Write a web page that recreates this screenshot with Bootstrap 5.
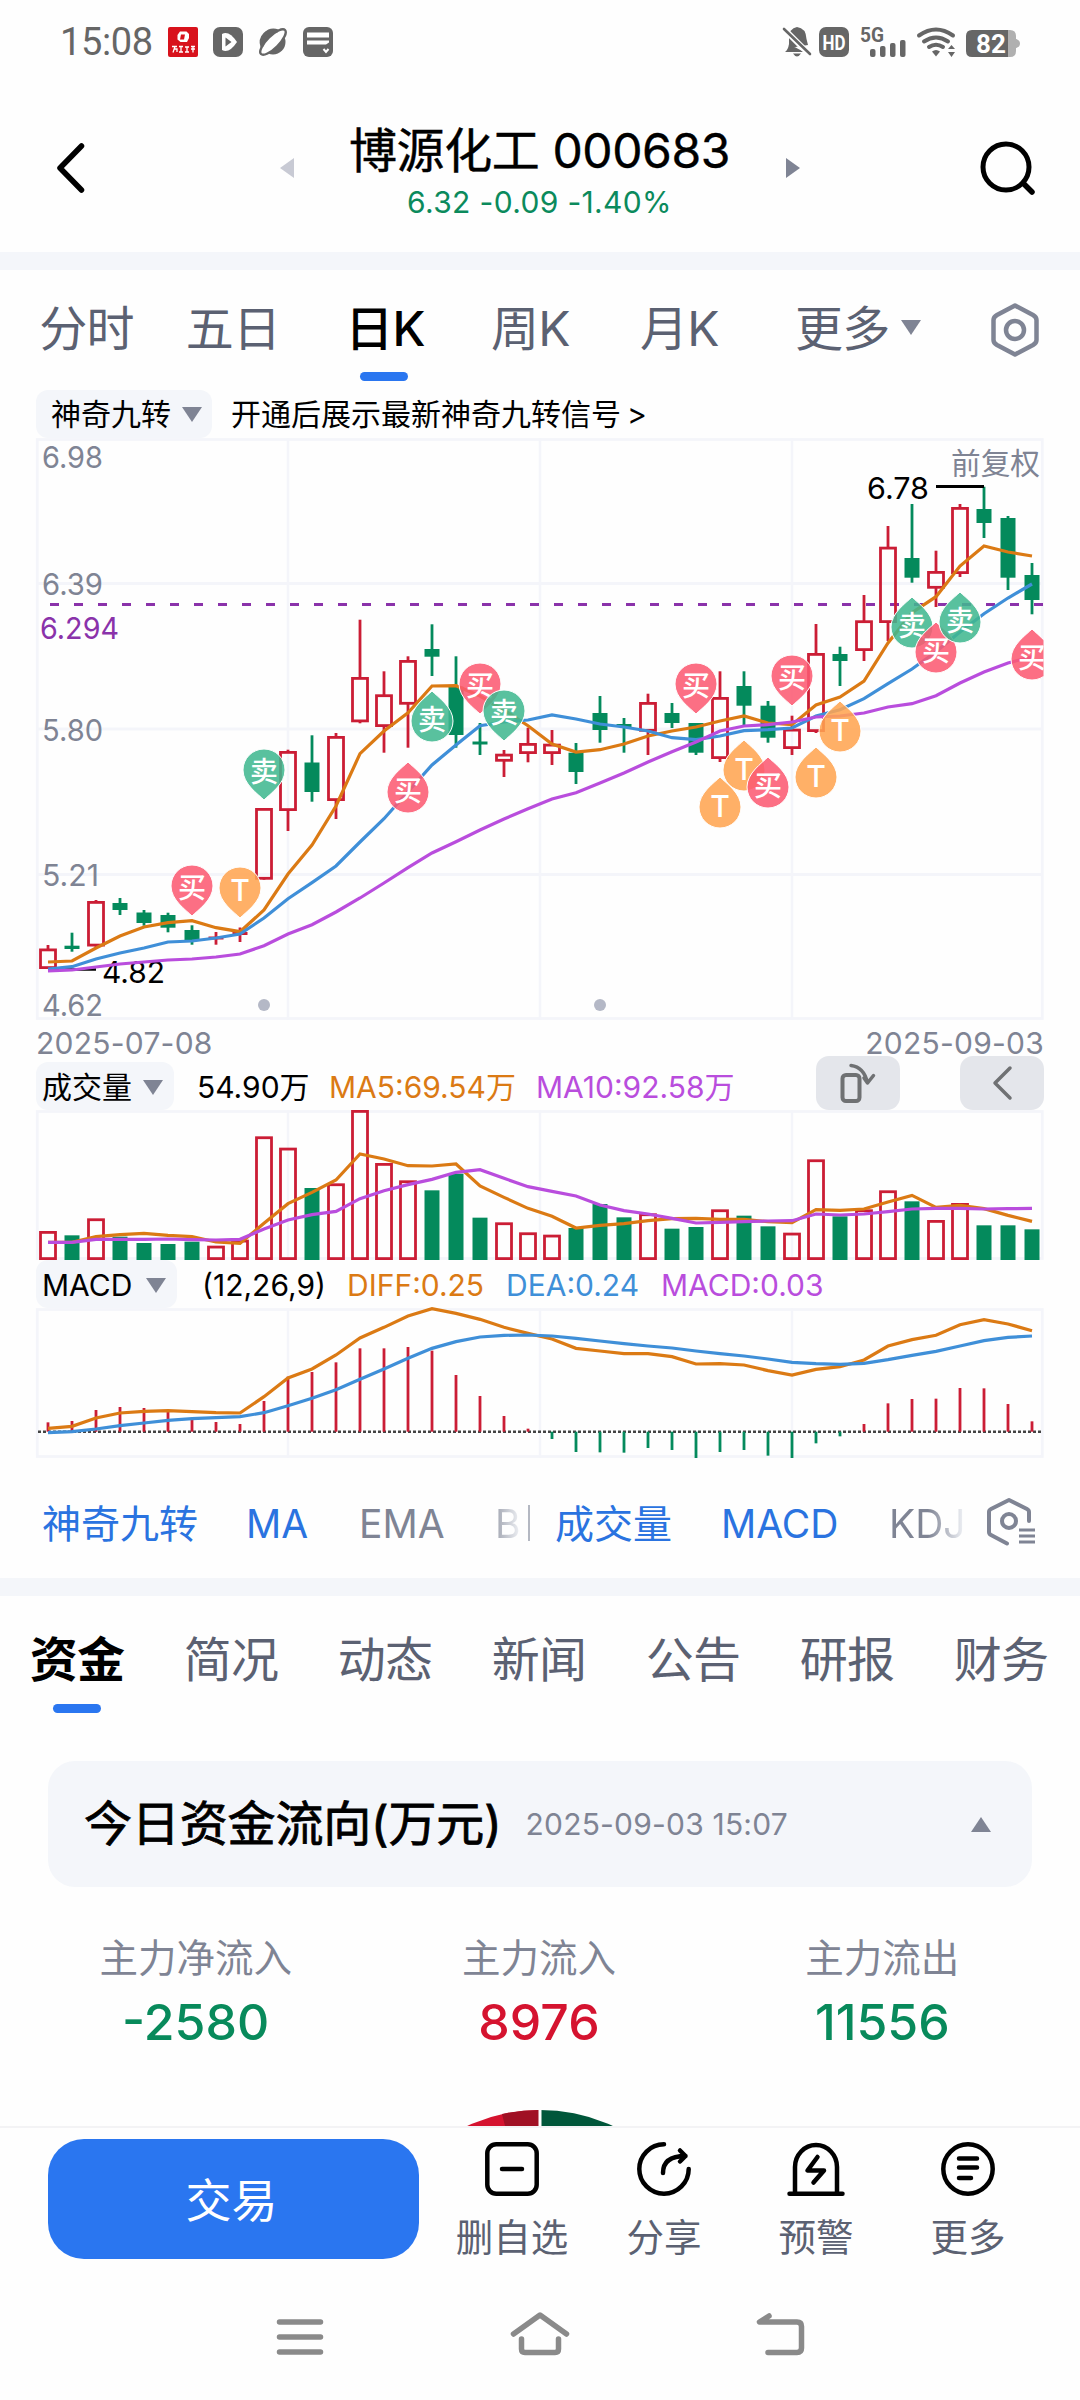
<!DOCTYPE html>
<html lang="zh-CN">
<head>
<meta charset="utf-8">
<meta name="viewport" content="width=device-width, initial-scale=1">
<title>博源化工 000683</title>
<link href="https://cdn.jsdelivr.net/npm/bootstrap@5.3.0/dist/css/bootstrap.min.css" rel="stylesheet">
<style>
body{width:1080px;height:2400px;overflow:hidden;background:#fefefe;color:#000;font-family:Inter,"Noto Sans CJK SC",sans-serif;line-height:1;white-space:nowrap}
svg{display:block;flex:none;overflow:visible}
.h-status{height:84px;padding:0 59px 0 60px;color:#666}
.clock{font:400 38px/1 Roboto,sans-serif;width:93px;letter-spacing:-.4px}
.h-head{height:168px;padding:0 46px 0 55px}
.stock-title{font-size:48px;line-height:54px;letter-spacing:-.4px;-webkit-text-stroke:.4px #000;padding-top:5px}
.quote{font-size:30px;line-height:32px;letter-spacing:.35px;color:#0b8a5c}
.band{height:18px;background:#f4f6fa}
.h-tabs{height:120px;padding-left:14px}
.ktab{font-size:48px;line-height:60px;color:#5b6172;text-align:center;letter-spacing:-.7px;padding-top:29px;height:120px;position:relative}
.ktab.on{color:#000;font-weight:500}
.ktab.on::after{content:"";position:absolute;left:50%;margin-left:-25px;bottom:9px;width:48px;height:9px;border-radius:5px;background:#2a76f0}
.ind-row{height:48px;padding-left:36px;font-size:30px}
.ind-low>span,.ind-low>.pill{padding-top:2px!important}
.pill{height:48px;border-radius:12px;background:#f4f6fa}
.tri-d{width:0;height:0;border:10.5px solid transparent;border-top:15px solid #7f8494;border-bottom:0}
.tri-u{width:0;height:0;border:10.5px solid transparent;border-bottom:15px solid #7f8494;border-top:0}
.tri-l{width:0;height:0;border:10px solid transparent;border-right:14px solid #c8cad4;border-left:0}
.tri-r{width:0;height:0;border:10px solid transparent;border-left:14px solid #7f8494;border-right:0}
.dates{height:42px;padding:8px 36px 0;font-size:30px;letter-spacing:.25px;color:#7f8494}
.c-or{color:#db7a14}.c-bl{color:#3f8fd8}.c-pu{color:#b94ddd}
.tool{width:84px;height:54px;border-radius:13px;background:#e4e6eb;margin-top:-6px}
.chips{height:120px;padding:10px 0 0 42px;font-size:39px;color:#7f8494}
.chips .act{color:#2a73e0}
.fade-b{width:30px;background:linear-gradient(90deg,#a0a4b0,#eceef2 80%);-webkit-background-clip:text;background-clip:text;color:transparent}
.fade-k{background:linear-gradient(90deg,#7f8494 40%,#f4f6fa 78%);-webkit-background-clip:text;background-clip:text;color:transparent}
.h-tabs2{height:165px;padding-left:0}
.itab{width:154px;text-align:center;font-size:48px;line-height:60px;color:#5b6172;padding-top:34px;letter-spacing:-.7px;position:relative}
.itab.on{color:#000;font-weight:700}
.itab.on::after{content:"";position:absolute;left:53px;top:108px;width:48px;height:9px;border-radius:5px;background:#2a76f0}
.flow-card{height:126px;margin:0 48px;border-radius:27px;background:#f4f6fa;padding:0 41px 0 36px}
.flow-title{font-size:48px;letter-spacing:-.15px;-webkit-text-stroke:.8px #000}
.flow-date{font-size:30px;color:#7f8494;letter-spacing:.2px}
.stats{padding:0 26px 0 24px;height:223px}
.stats .lbl{font-size:38.5px;line-height:48px;color:#7f8494;margin-top:47px}
.stats .num{font-size:50px;line-height:56px;font-weight:500;margin-top:12px;letter-spacing:0}
.c-gr{color:#088a5b}.c-rd{color:#d5132f}
.act-bar{height:158px;border-top:2px solid #f3f3f5;padding:11px 36px 0 48px}
.trade{width:372px;height:120px;border-radius:36px;background:#2a76f0;color:#fff;font-size:46px;border:0;line-height:1;padding:2px 4px 0 0}
.act-i{width:152px;font-size:37.5px;color:#5b6172;padding-top:3px}
.act-i span{line-height:44px;margin-top:20px}
.sysnav{padding:28px 276px 0}
</style>
</head>
<body>
<div class="d-flex align-items-center h-status">
  <span class="clock">15:08</span>
  <div class="d-flex" style="gap:15px;margin-left:15px">
    <svg width="30" height="30" viewBox="0 0 30 30"><rect width="30" height="30" rx="2" fill="#d8121c"/><path d="M12 4.500h6.500l2.500 2.500v4l-2 4h-6.500l-3-2.500V8z" fill="#fff"/><path d="M13 7.500h4l-1 5h-4z" fill="#d8121c"/><path d="M4 19.500h5M7 19.500l-2 6M6 22h3v3M11 19.500h4M13 19.500v5M11 25h4M17 20h4M19 20v5M17 25h4M23 19.500h4M25 19.500v6M23 22h4" stroke="#fff" stroke-width="1.300" fill="none"/></svg>
    <svg width="30" height="30" viewBox="0 0 30 30"><rect width="30" height="30" rx="7" fill="#666"/><path d="M9 7q7-4 15 8q-8 12-15 8z" fill="#fff"/><path d="M12.500 10.500v9l6-4.500z" fill="#666"/></svg>
    <svg width="30" height="30" viewBox="0 0 30 30"><circle cx="15" cy="15" r="12.500" fill="#666"/><ellipse cx="15" cy="15" rx="17" ry="6" transform="rotate(-45 15 15)" fill="#fff" stroke="#666" stroke-width="2.400"/><path d="M4 20A12.500 12.500 0 0 1 20 4" fill="none" stroke="#666" stroke-width="3"/></svg>
    <svg width="30" height="30" viewBox="0 0 30 30"><rect width="30" height="30" rx="6" fill="#666"/><path d="M4 5.500h22v5H4z M4 13.500h22v2l-3 2H4z" fill="#fff"/><path d="M20.500 22l2.500 3 2.500-3" stroke="#fff" stroke-width="2" fill="none"/></svg>
  </div>
  <svg class="ms-auto" width="238" height="32" viewBox="783 26 238 32">
    <g fill="#666"><path d="M789 48V39q0-11 8-12 9 1 9.500 12l1.500 6zM785 52q3-2 4-8l15 8zM793 53.500h8q-4 6-8 0z"/>
    <path d="M784 29l26 26" stroke="#fff" stroke-width="6"/><path d="M784 29l26 25" stroke="#666" stroke-width="2.600" stroke-linecap="round"/>
    <rect x="819" y="27" width="30" height="30" rx="7"/>
    <rect x="870" y="49" width="5.500" height="8" rx="2"/><rect x="880" y="46" width="5.500" height="11" rx="2"/><rect x="890" y="43" width="5.500" height="14" rx="2"/><rect x="900" y="40" width="5.500" height="17" rx="2"/>
    <path d="M932 51.500q4-3 8 0l-4 5z"/><path d="M948 49l3.500-4 3.500 4zM948 52l3.500 5 3.500-5z"/></g>
    <path d="M919 35.500q17-12 34 0M924 41.500q12-8 24 0M929 47q7-4.500 14 0" stroke="#666" stroke-width="4" fill="none" stroke-linecap="round"/>
    <path d="M1008 30h2q6 0 6 6v3q4 1 4 4.500t-4 4.500v3q0 6-6 6h-2z" fill="#b0b0b0"/><path d="M972 30h36v27h-36q-6 0-6-6V36q0-6 6-6z" fill="#666"/>
    <g font-family="Roboto,sans-serif" font-weight="700"><text x="834" y="49.500" text-anchor="middle" font-size="20" fill="#fff" textLength="23" lengthAdjust="spacingAndGlyphs">HD</text><text x="860" y="41.500" font-size="19.500" fill="#666" textLength="24" lengthAdjust="spacingAndGlyphs">5G</text><text x="991" y="53" font-size="26" text-anchor="middle" fill="#fff">82</text></g>
  </svg>
</div>
<div class="d-flex align-items-center h-head">
  <svg width="30" height="52" viewBox="55 142 30 52" style="margin-right:14px"><path d="M81.500 146L60 168l21.500 22" fill="none" stroke="#000" stroke-width="5.500" stroke-linecap="round" stroke-linejoin="round"/></svg>
  <div class="d-flex align-items-center justify-content-between mx-auto" style="width:520px">
    <i class="tri-l"></i>
    <div class="text-center"><div class="stock-title">博源化工 000683</div><div class="quote mt-2">6.32 -0.09 -1.40%</div></div>
    <i class="tri-r"></i>
  </div>
  <svg width="54" height="54" viewBox="980 140 54 54"><circle cx="1006" cy="166" r="23" fill="none" stroke="#000" stroke-width="5"/><path d="M1024 183l8 8" stroke="#000" stroke-width="5.500" stroke-linecap="round"/></svg>
</div>
<div class="band"></div>
<div class="d-flex h-tabs">
  <div class="ktab" style="width:145px">分时</div><div class="ktab" style="width:148px">五日</div><div class="ktab on" style="width:156px">日K</div><div class="ktab" style="width:135px">周K</div><div class="ktab" style="width:163px">月K</div>
  <div class="ktab" style="margin-left:34px">更多</div><i class="tri-d" style="margin:50px 0 0 11px"></i>
  <svg width="52" height="58" viewBox="0 0 52 58" style="margin:31px 0 0 68px"><path d="M26 4.500L44 14q3.500 2 3.500 5v20q0 3-3.500 5L26 53.500 8 44q-3.500-2-3.500-5V19q0-3 3.500-5z" fill="none" stroke="#7f8494" stroke-width="4.500" stroke-linejoin="round"/><circle cx="26" cy="29" r="9" fill="none" stroke="#7f8494" stroke-width="4.500"/></svg>
</div>
<div class="d-flex align-items-center ind-row">
  <div class="pill d-flex align-items-center justify-content-between" style="width:176px;padding:0 10px 0 15px">神奇九转<i class="tri-d"></i></div>
  <span style="margin-left:19px">开通后展示最新神奇九转信号<span style="margin-left:6px">&gt;</span></span>
</div>
<svg id="kline" width="1080" height="582" viewBox="0 438 1080 582"></svg>
<div class="d-flex justify-content-between dates"><span>2025-07-08</span><span>2025-09-03</span></div>
<div class="d-flex align-items-center ind-row ind-low">
  <div class="pill d-flex align-items-center justify-content-between" style="width:138px;padding:0 11px 0 6px">成交量<i class="tri-d"></i></div>
  <span style="width:132px;margin-left:23px">54.90万</span><span class="c-or" style="width:207px">MA5:69.54万</span><span class="c-pu" style="width:280px">MA10:92.58万</span>
  <div class="tool d-flex align-items-center justify-content-center"><svg width="38" height="44" viewBox="0 0 38 44"><rect x="3.500" y="14" width="17" height="26" rx="3.500" fill="none" stroke="#6f7173" stroke-width="4"/><path d="M12 4.500Q25 6 28.500 22M34.500 14.500l-6 7.500-3.500-5" fill="none" stroke="#6f7173" stroke-width="3.500" stroke-linecap="round" stroke-linejoin="round"/></svg></div>
  <div class="tool d-flex align-items-center justify-content-center" style="margin-left:60px"><svg width="20" height="36" viewBox="0 0 20 36"><path d="M18 3L3 18l15 15" fill="none" stroke="#6f7173" stroke-width="3.500" stroke-linecap="round" stroke-linejoin="round"/></svg></div>
</div>
<svg id="vol" width="1080" height="150" viewBox="0 1110 1080 150"></svg>
<div class="d-flex align-items-center ind-row ind-low">
  <div class="pill d-flex align-items-center justify-content-between" style="width:141px;padding:0 11px 0 6px">MACD<i class="tri-d"></i></div>
  <span style="width:145px;margin-left:25px">(12,26,9)</span><span class="c-or" style="width:159px">DIFF:0.25</span><span class="c-bl" style="width:155px">DEA:0.24</span><span class="c-pu">MACD:0.03</span>
</div>
<svg id="macd" width="1080" height="150" viewBox="0 1308 1080 150"></svg>
<div class="d-flex align-items-center chips">
  <span class="act" style="width:204px">神奇九转</span><span class="act" style="width:113px">MA</span><span style="width:136px">EMA</span><span class="fade-b">B</span>
  <i style="width:2px;height:36px;background:#b4b8c2;margin:0 25px 0 3px"></i>
  <span class="act" style="width:166px">成交量</span><span class="act" style="width:168px">MACD</span><span class="fade-k" style="width:98px">KDJ</span>
  <svg width="50" height="48" viewBox="987 1498 50 48"><path d="M1029 1520v-9q0-2-2-3l-18-9-18 9q-2 1-2 3v20q0 2 2 3l16 8.500" fill="none" stroke="#7f8494" stroke-width="4" stroke-linejoin="round" stroke-linecap="round"/><circle cx="1009" cy="1520" r="7" fill="none" stroke="#7f8494" stroke-width="4"/><path d="M1019 1529h16M1019 1535h16M1019 1541h16" stroke="#7f8494" stroke-width="3"/></svg>
</div>
<div class="band"></div>
<div class="d-flex h-tabs2">
  <div class="itab on">资金</div><div class="itab">简况</div><div class="itab">动态</div><div class="itab">新闻</div><div class="itab">公告</div><div class="itab">研报</div><div class="itab">财务</div>
</div>
<div class="flow-card d-flex align-items-center"><span class="flow-title">今日资金流向(万元)</span><span class="flow-date" style="margin-left:24px">2025-09-03 15:07</span><i class="tri-u ms-auto"></i></div>
<div class="row g-0 stats text-center">
  <div class="col"><div class="lbl">主力净流入</div><div class="num c-gr">-2580</div></div>
  <div class="col"><div class="lbl">主力流入</div><div class="num c-rd">8976</div></div>
  <div class="col"><div class="lbl">主力流出</div><div class="num c-gr">11556</div></div>
</div>
<svg width="1080" height="16" viewBox="0 2110 1080 16" style="overflow:hidden"><circle cx="540" cy="2284" r="174" fill="#00563a"/><path d="M540 2284V2100H300V2284z" fill="#fefefe"/><path d="M540 2284V2110A174 174 0 0 0 366 2284z" fill="#d5132f"/><path d="M540 2284V2110A174 174 0 0 0 502 2114L505 2126z" fill="#a01024"/><path d="M540 2108v20" stroke="#fff" stroke-width="3"/></svg>
<div class="d-flex act-bar">
  <button class="btn trade">交易</button>
  <div class="d-flex" style="margin-left:17px">
    <div class="act-i d-flex flex-column align-items-center"><svg width="54" height="54" viewBox="0 0 54 54" fill="none" stroke="#000" stroke-width="4.500" stroke-linecap="round"><rect x="2.300" y="2.300" width="49.400" height="49.400" rx="9"/><path d="M17 27h20"/></svg><span>删自选</span></div>
    <div class="act-i d-flex flex-column align-items-center"><svg width="54" height="54" viewBox="0 0 54 54" fill="none" stroke="#000" stroke-width="4.500" stroke-linecap="round" stroke-linejoin="round"><path d="M27 2.300A24.700 24.700 0 1 0 51.700 27"/><path d="M26 31Q26 14 48.500 14M43 8.500l5.500 5.500-5.500 5.500"/></svg><span>分享</span></div>
    <div class="act-i d-flex flex-column align-items-center"><svg width="58" height="54" viewBox="0 0 58 54" fill="none" stroke="#000" stroke-width="4.500" stroke-linecap="round" stroke-linejoin="round"><path d="M8 51V25a21 22 0 0 1 42 0v26M2.500 51.700h53"/><path d="M30.500 15L20.500 28.500H37L26.500 40.500"/></svg><span>预警</span></div>
    <div class="act-i d-flex flex-column align-items-center"><svg width="54" height="54" viewBox="0 0 54 54" fill="none" stroke="#000" stroke-width="4.500" stroke-linecap="round"><circle cx="27" cy="27" r="24.700"/><path d="M18 16.500h18M18 25.500h18M18 36h12"/></svg><span>更多</span></div>
  </div>
</div>
<div class="d-flex justify-content-between sysnav">
  <svg width="48" height="48" viewBox="276 2312 48 48"><path d="M279.500 2322h41M279.500 2337h41M279.500 2352h41" stroke="#8a8a8a" stroke-width="5.500" stroke-linecap="round"/></svg>
  <svg width="58" height="48" viewBox="511 2312 58 48" fill="none" stroke="#8a8a8a" stroke-width="5.500" stroke-linecap="round" stroke-linejoin="round"><path d="M513.500 2334L540 2315l26.500 19M521.500 2339v10q0 3.500 3.500 3.500h30q3.500 0 3.500-3.500v-10"/></svg>
  <svg width="48" height="48" viewBox="756 2312 48 48" fill="none" stroke="#8a8a8a" stroke-width="5.500" stroke-linecap="round" stroke-linejoin="round"><path d="M769 2316l-9.500 6H797q4.500 0 4.500 4.500v21.500q0 4.500-4.500 4.500h-29"/></svg>
</div>
<script src="https://cdn.jsdelivr.net/npm/bootstrap@5.3.0/dist/js/bootstrap.bundle.min.js"></script>
<script>
const RED='#cb1d35', GRN='#048a5c', GRID='#f4f5fa', OR='#db7a14', BL='#3f8fd8', PU='#b94ddd', GREY='#7f8494';
const X=i=>48+24*i;
const rect=(x,y,w,h,a)=>`<rect x="${x}" y="${y}" width="${w}" height="${h}" ${a}/>`;
const line=(x1,y1,x2,y2,c,w,a='')=>`<path d="M${x1} ${y1}L${x2} ${y2}" stroke="${c}" stroke-width="${w}" ${a}/>`;
const poly=(ys,c)=>`<polyline points="${ys.map((y,i)=>X(i)+','+y).join(' ')}" fill="none" stroke="${c}" stroke-width="3.2"/>`;
const label=(x,y,s,len,c,size=30)=>`<text x="${x}" y="${y}" font-size="${size}" fill="${c}" textLength="${len}" lengthAdjust="spacingAndGlyphs">${s}</text>`;
const grid=(t,b,hs)=>rect(37.3,t+1.5,1005,b-t-3,`fill="none" stroke="${GRID}" stroke-width="2.8"`)+[288,540,792].map(x=>line(x,t,x,b,GRID,2.5)).join('')+hs.map(y=>line(37,y,1043,y,GRID,3)).join('');

// [type, high, body top, body bottom, low]
const K=[['r',945,948.5,969,969],['g',932.7,945.7,949,951.7],['r',900,901,946.5,948],['g',898,903,910,915],['g',910,912.5,923,925.7],['g',912.7,915,927.7,932.3],['g',925.3,930,941,944.7],['r',932,936.5,938.5,944.7],['r',927.5,932,934,942],['r',808,808,879.7,879.7],['r',749.7,751,811,831],['g',735.3,762.5,792,801.7],['r',733,736,801,819],['r',619.7,677,722.3,723.3],['r',671.3,694.3,727,752.7],['r',656.3,660,704.7,747.7],['g',624.3,649,656.7,676],['g',656.3,686.7,735,747.7],['g',723,741.5,744,755],['r',750,753.7,761.7,777],['r',727.7,743,754,762.3],['r',730,743.7,754,765],['g',743,752.7,772,784],['g',696,713,730,742.7],['g',718,724,727,752.7],['r',693.7,702,731.7,755],['g',703,713,723,728],['g',723,723,752.7,755],['r',671.3,697,759,762],['g',671.3,686,705.7,725.7],['g',701,705.7,737.7,742.7],['r',715.7,728.7,749,755],['r',624,653,732,733],['g',646.7,654,661,686],['r',595,620.3,651,661],['r',526,546.7,623,641],['g',504,558,577.7,582.7],['r',550.7,571,588.7,607],['r',504,507,574,577],['g',486.7,509,523,538],['g',516,518,577.7,590],['g',563,575,600,614.3]];
const M5=[962,961,948,936,927,922.7,920.7,927.7,931.7,910,874,845,806,753.7,731,712.7,686,685.7,696,710,725.7,744,752,749.7,744,736,731,727,721,716,723,724.7,705,697,681,643,612.7,596.7,566,546,552,556];
const M10=[969,966.7,959,953,948,942,941,938,934,918,898.7,882.7,866,842,818.7,791.7,765,745,725.7,722,720,715,719,724,727,731,737.7,739.7,736,730.7,729.7,728,716,709.7,698.7,683.7,669,651.7,632,613.7,598,584];
const M20=[971,970,967,964,962,960,959,957,954,945.7,934,924.7,912,898,883,867.7,853,841.7,830,819,808.7,799,792.7,783,773,762,751.7,742,731,726,724.7,722,717,716,713,707,703.7,695.7,683,672,663,656.7];
// signal pins: [glyph, index, direction, top]
const P=[['买',6,'d',865],['T',8,'d',867],['卖',9,'d',749],['买',15,'u',762],['卖',16,'u',691],['买',18,'d',663],['卖',19,'d',690],['买',27,'d',663],['T',28,'u',777],['T',29,'u',740],['买',30,'u',757],['买',31,'d',655],['T',32,'u',747],['T',33,'u',701],['卖',36,'u',597],['买',37,'u',622],['卖',38,'u',592],['买',41,'u',629]];
const PC={'买':'#fb5a72','卖':'#40b890','T':'#ffa450'};
let s=grid(438,1020,[583.5,729,874.5]);
s+=line(50,604.5,1043,604.5,'#8a32aa',3,'stroke-dasharray="9 15"');
s+=label(42,467.5,'6.98',61,GREY)+label(42,594.5,'6.39',61,GREY)+label(40,638.500,'6.294',79,'#8a32aa')+label(42,740.5,'5.80',61,GREY)+label(42,885.5,'5.21',57,GREY)+label(42,1016,'4.62',61,GREY);
s+=label(951,474,'前复权',89,GREY);
K.forEach(([t,h,a,b,l],i)=>{const x=X(i);
  if(t==='g') s+=line(x,h,x,l,GRN,2.8)+rect(x-7.5,a,15,Math.max(b-a,3),`fill="${GRN}"`);
  else if(b-a<4) s+=line(x,h,x,l,RED,2.8)+rect(x-7.5,a,15,3,`fill="${RED}"`);
  else s+=line(x,h,x,a+1,RED,2.8)+line(x,b-1,x,l,RED,2.8)+rect(x-7.5,a+1.4,15,b-a-2.8,`fill="none" stroke="${RED}" stroke-width="2.8"`);
});
s+=line(48,969.5,96,969.5,'#000',2.5)+label(102,983,'4.82',63,'#000')+line(936,486.5,984,486.5,'#000',3)+label(867,499,'6.78',62,'#000');
s+=poly(M5,OR)+poly(M10,BL)+poly(M20,PU);
s+='<clipPath id="plot"><rect x="0" y="438" width="1043.5" height="582"/></clipPath><g clip-path="url(#plot)">';
P.forEach(([g,i,d,t])=>{const x=X(i), cy=d==='d'?t+22:t+29, f=d==='d'?1:-1;
  s+=`<path transform="translate(${x} ${cy}) scale(1 ${f})" d="M0 29C-6 23-21 13-21-1A21 21 0 0 1 21-1C21 13 6 23 0 29z" fill="${PC[g]}" fill-opacity=".87" stroke="#fff" stroke-width="1"/><text x="${x}" y="${cy+(g==='T'?(d==='d'?12:11):(d==='d'?11:10))}" text-anchor="middle" font-size="${g==='T'?30:28}" font-weight="500" fill="#fff">${g}</text>`;});
s+='</g>'+`<circle cx="264" cy="1005" r="6" fill="#b4b8c6"/><circle cx="600" cy="1005" r="6" fill="#b4b8c6"/>`;
kline.innerHTML=s;

const V=[573,586,535,590,609,612,605,617,599,289,323,444,430,210,369,421,451,401,533,547,577,584,564,492,532,520,566,561,508,527,559,578,358,529,508,451,484,540,489,556,556,568].map(v=>1040+v/3);
const vt='rgrggggrrrrgrrrrgggrrrgggrggrggrrgrrgrrggg';
const V5=[607,607,590,584,580,586,590,606,610,550,491,457,420,342,357,377,378,372,438,472,505,529,564,556,551,542,536,535,538,538,545,548,509,511,507,486,466,502,496,506,526,544].map(v=>1040+v/3);
const V10=[607,607,598,598,598,597,599,600,598,567,540,524,514,476,452,434,418,397,389,415,440,454,468,495,512,522,535,549,547,545,543,542,522,525,522,515,507,505,505,507,506,505].map(v=>1040+v/3);
s=grid(1110,1260,[]);
V.forEach((y,i)=>{const x=X(i); s+=vt[i]==='g'?rect(x-7.5,y,15,1260-y,`fill="${GRN}"`):rect(x-7.5,y+1.4,15,1258.6-y-1.4,`fill="none" stroke="${RED}" stroke-width="2.8"`);});
vol.innerHTML=s+poly(V5,OR)+poly(V10,PU);

const H=[517,513,480,471,474,485,508,516,522,453,380,366,337,295,295,291,302,375,438,498,536,567,606,607,608,594,600,624,606,600,617,624,580,559,522,460,447,446,414,415,462,514].map(v=>1250+v/3);
const D1=[535,529,504,489,484,482,485,488,489,440,384,357,315,264,232,198,176,190,208,232,250,267,295,303,311,311,320,342,341,345,362,375,358,350,330,288,269,256,224,209,222,242].map(v=>1250+v/3);
const D2=[548,545,537,527,519,511,506,503,500,488,467,445,419,388,357,325,295,275,261,256,255,258,265,273,281,288,294,303,311,318,327,337,341,343,340,329,316,304,288,272,262,258].map(v=>1250+v/3);
s=grid(1308,1458,[])+line(38,1431.7,1043,1431.7,'#444',2.6,'stroke-dasharray="3 2"');
H.forEach((y,i)=>s+=line(X(i),1431.7,X(i),y,y<1431.7?RED:GRN,2.8));
macd.innerHTML=s+poly(D1,OR)+poly(D2,BL);
</script>
</body>
</html>
